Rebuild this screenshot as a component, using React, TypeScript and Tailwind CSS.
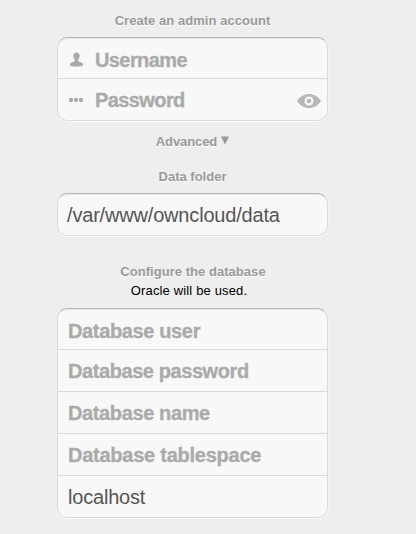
import type { ReactNode } from "react";

const panel =
  "w-[271px] overflow-hidden rounded-[10px] border border-[#dadada] border-t-[#b8b8b8] bg-[#f8f8f8] shadow-[0_1px_0_#fbfbfb,inset_0_1px_0_#e6e6e6,1px_0_0_#f4f4f4]";

function Label({ children, className }: { children: ReactNode; className: string }) {
  return (
    <div className={`h-4 whitespace-nowrap text-[13px] leading-4 font-bold text-[#999] [text-shadow:0_1px_0_#fff] ${className}`}>
      {children}
    </div>
  );
}

function Placeholder({ children, className }: { children: ReactNode; className: string }) {
  return <span className={`whitespace-nowrap text-[20px] leading-6 font-bold text-[#aaa] [-webkit-text-stroke:0.3px_#aaa] ${className}`}>{children}</span>;
}

function UserIcon() {
  return (
    <svg className="h-4 w-4 shrink-0" viewBox="0 0 16 16" fill="#aaa">
      <path d="M8.500 0.500C6.400 0.500 5.300 1.900 5.300 3.800c0 1.600.6 2.600 1.400 3.500v1.700C6.200 10.300 2 10.100 1.800 12.700c0 1.300 2.700 1.800 6.700 1.800s6.700-.5 6.700-1.800c-.2-2.600-4.400-2.400-4.900-3.700V7.300c.8-.9 1.400-1.900 1.400-3.500C11.700 1.900 10.600 0.500 8.500 0.500z" />
    </svg>
  );
}

function DotsIcon() {
  return (
    <svg className="h-4 w-4 shrink-0" viewBox="0 0 16 16" fill="#aaa">
      <circle cx="3" cy="8" r="2.150" />
      <circle cx="8" cy="8" r="2.150" />
      <circle cx="13" cy="8" r="2.150" />
    </svg>
  );
}

function EyeIcon() {
  return (
    <svg className="h-4 w-6 shrink-0" viewBox="0 0 24 16" fill="none">
      <path d="M0 8C3.500 3 7.500 1 12 1s8.500 2 12 7c-3.500 5-7.500 7-12 7S3.500 13 0 8z" fill="#b7b7b7" />
      <circle cx="12" cy="8" r="3.400" stroke="#f8f8f8" strokeWidth="2.200" />
    </svg>
  );
}

export default function App() {
  return (
    <main className="h-[534px] w-[416px] overflow-hidden bg-[#eee] font-['Liberation_Sans',Arial,sans-serif]">
      <div className="ml-[57px] flex w-[271px] flex-col items-center pt-[13px]">
        <Label className="tracking-[0.05px]">Create an admin account</Label>

        <div className={`mt-2 h-[84px] ${panel}`}>
          <div className="flex h-[41px] items-center border-b border-[#dadada] pt-1 pl-2.5">
            <UserIcon />
            <Placeholder className="ml-[11px] tracking-[-0.6px]">Username</Placeholder>
          </div>
          <div className="flex h-[41px] items-center pr-[6px] pl-2.5">
            <DotsIcon />
            <Placeholder className="ml-[11px] tracking-[-0.6px]">Password</Placeholder>
            <span className="mt-[3px] ml-auto flex">
              <EyeIcon />
            </span>
          </div>
        </div>

        <Label className="mt-[13px] flex tracking-[-0.1px]">
          Advanced
          <svg className="mt-[2px] ml-1 h-[9px] w-2" viewBox="0 0 8 9" fill="#999">
            <path d="M0 0.500h8L4 8.500z" />
          </svg>
        </Label>
        <Label className="mt-[19px]">Data folder</Label>

        <div className={`mt-2 flex h-[43px] items-center pl-[9px] ${panel}`}>
          <span className="whitespace-nowrap text-[20px] leading-6 tracking-[-0.18px] text-[#555]">/var/www/owncloud/data</span>
        </div>

        <Label className="mt-7 ml-px tracking-[0.04px]">Configure the database</Label>
        <div className="mt-[3px] mr-[7px] h-4 whitespace-nowrap text-[13px] leading-4 tracking-[0.15px] text-black">
          Oracle will be used.
        </div>

        <div className={`mt-[9px] h-[210px] ${panel}`}>
          <div className="flex h-[41px] items-center border-b border-[#dadada] pt-1 pl-2.5">
            <Placeholder className="tracking-[-0.36px]">Database user</Placeholder>
          </div>
          <div className="flex h-[42px] items-center border-b border-[#dadada] pl-2.5">
            <Placeholder className="tracking-[-0.42px]">Database password</Placeholder>
          </div>
          <div className="flex h-[42px] items-center border-b border-[#dadada] pl-2.5">
            <Placeholder className="tracking-[-0.38px]">Database name</Placeholder>
          </div>
          <div className="flex h-[42px] items-center border-b border-[#dadada] pl-2.5">
            <Placeholder className="tracking-[-0.25px]">Database tablespace</Placeholder>
          </div>
          <div className="flex h-[41px] items-center pl-2.5">
            <span className="whitespace-nowrap text-[20px] leading-6 tracking-[-0.2px] text-[#555]">localhost</span>
          </div>
        </div>
      </div>
    </main>
  );
}
